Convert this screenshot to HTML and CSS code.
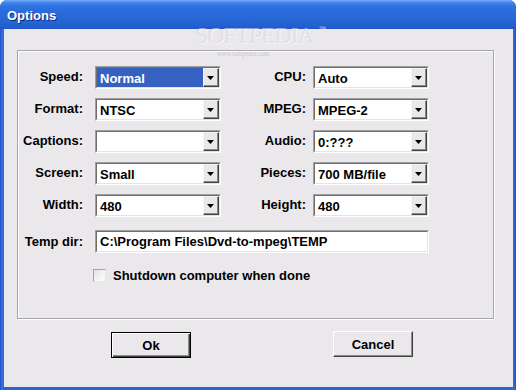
FILE: index.html
```html
<!DOCTYPE html>
<html>
<head>
<meta charset="utf-8">
<title>Options</title>
<link rel="stylesheet" href="styles.css">
</head>
<body>
<div class="window">
  <div class="titlebar"><span class="title">Options</span></div>
  <div class="client">
    <div class="group">
      <div class="form">
        <span class="lbl">Speed:</span>
        <div class="combo"><div class="combo-in"><span class="val sel">Normal</span><span class="drop"></span></div></div>
        <span class="lbl lbl-r">CPU:</span>
        <div class="combo"><div class="combo-in"><span class="val">Auto</span><span class="drop"></span></div></div>

        <span class="lbl">Format:</span>
        <div class="combo"><div class="combo-in"><span class="val">NTSC</span><span class="drop"></span></div></div>
        <span class="lbl lbl-r">MPEG:</span>
        <div class="combo"><div class="combo-in"><span class="val">MPEG-2</span><span class="drop"></span></div></div>

        <span class="lbl">Captions:</span>
        <div class="combo"><div class="combo-in"><span class="val"></span><span class="drop"></span></div></div>
        <span class="lbl lbl-r">Audio:</span>
        <div class="combo"><div class="combo-in"><span class="val">0:???</span><span class="drop"></span></div></div>

        <span class="lbl">Screen:</span>
        <div class="combo"><div class="combo-in"><span class="val">Small</span><span class="drop"></span></div></div>
        <span class="lbl lbl-r">Pieces:</span>
        <div class="combo"><div class="combo-in"><span class="val">700 MB/file</span><span class="drop"></span></div></div>

        <span class="lbl">Width:</span>
        <div class="combo"><div class="combo-in"><span class="val">480</span><span class="drop"></span></div></div>
        <span class="lbl lbl-r">Height:</span>
        <div class="combo"><div class="combo-in"><span class="val">480</span><span class="drop"></span></div></div>

        <span class="lbl lbl-temp">Temp dir:</span>
        <div class="textbox"><div class="textbox-in">C:\Program Files\Dvd-to-mpeg\TEMP</div></div>

        <div class="check"><span class="box"></span><span>Shutdown computer when done</span></div>
      </div>
    </div>
    <div class="buttons">
      <button class="pbtn pbtn-default">Ok</button>
      <button class="pbtn">Cancel</button>
    </div>
  </div>
  <div class="wm">SOFTPEDIA<span class="tm">™</span></div>
  <div class="wm-url">www.softpedia.com</div>
</div>
</body>
</html>
```
FILE: styles.css
```css
html, body {
  margin: 0;
  padding: 0;
  width: 516px;
  height: 390px;
  overflow: hidden;
  background: #ffffff;
}

body {
  font-family: "Liberation Sans", Arial, sans-serif;
  font-size: 13px;
  font-weight: bold;
  color: #000;
}

.window {
  position: relative;
  width: 516px;
  height: 390px;
  box-sizing: border-box;
  border-radius: 7px 7px 0 0;
  background: linear-gradient(to right, #1a4fc4 0px, #3a74e0 2px, #2b63d2 4px, #2b63d2 512px, #3a72de 513px, #1c4fbf 516px);
  display: flex;
  flex-direction: column;
  overflow: hidden;
}

.titlebar {
  height: 29px;
  flex: none;
  border-radius: 7px 7px 0 0;
  background: linear-gradient(to bottom, #7bb1fa 0px, #4a8cf0 2px, #2f72e0 6px, #2a6bdb 12px, #2766d5 20px, #2360cf 26px, #1d57c6 29px);
  display: flex;
  align-items: center;
  padding-left: 7px;
  box-sizing: border-box;
}

.title {
  color: #fff;
  font-size: 13px;
  font-weight: bold;
  padding-top: 2px;
  text-shadow: 1px 1px 0 #0c2a80;
}

.client {
  flex: 1;
  margin: 0 3px 3px 4px;
  background: #ebe8ec;
  display: flex;
  flex-direction: column;
}

.group {
  margin: 21px 0 0 13px;
  width: 477px;
  height: 269px;
  box-sizing: border-box;
  border: 1px solid #a6a5a9;
  box-shadow: 1px 1px 0 #ffffff, inset 1px 1px 0 #ffffff;
  padding-top: 15px;
}

.form {
  display: grid;
  grid-template-columns: 77px 126px 92px 116px;
  grid-template-rows: 23px 23px 23px 23px 23px 27px 21px;
  row-gap: 9px;
  align-items: start;
}

.lbl {
  text-align: right;
  padding-right: 12px;
  line-height: 21px;
  white-space: nowrap;
}

.lbl-r {
  padding-right: 7px;
}

.lbl-temp {
  align-self: end;
  line-height: 21px;
  margin-bottom: 1px;
}

.combo, .textbox {
  height: 23px;
  box-sizing: border-box;
  border: 1px solid;
  border-color: #a0a0a0 #ffffff #ffffff #a0a0a0;
}

.combo-in, .textbox-in {
  height: 100%;
  box-sizing: border-box;
  border: 1px solid;
  border-color: #6e6e6e #e4e3e6 #e4e3e6 #6e6e6e;
  background: #ffffff;
}

.combo-in {
  display: flex;
}

.val {
  flex: 1;
  padding-left: 3px;
  line-height: 21px;
  white-space: nowrap;
  overflow: hidden;
}

.val.sel {
  background: #3562c0;
  color: #ffffff;
}

.drop {
  width: 16px;
  flex: none;
  box-sizing: border-box;
  border: 1px solid;
  border-color: #f4f3f5 #404040 #404040 #f4f3f5;
  box-shadow: inset -1px -1px 0 #8c8c8c;
  background: #ebe8ec;
  display: flex;
  align-items: center;
  justify-content: center;
}

.drop::after {
  content: "";
  width: 7px;
  height: 4px;
  margin: 1px 1px 0 0;
  background: #000;
  clip-path: polygon(0 0, 100% 0, 50% 100%);
}

.textbox {
  grid-column: 2 / 5;
  align-self: end;
  width: 334px;
}

.textbox-in {
  padding-left: 3px;
  line-height: 20px;
  white-space: nowrap;
}

.check {
  grid-column: 2 / 5;
  display: flex;
  align-items: center;
  margin: 7px 0 0 -2px;
  height: 13px;
  line-height: 14px;
  gap: 7px;
  white-space: nowrap;
}

.box {
  width: 13px;
  height: 13px;
  box-sizing: border-box;
  border: 1px solid;
  border-color: #a4a4a4 #e6e6e6 #e6e6e6 #a4a4a4;
  background: linear-gradient(135deg, #e2e1e4, #ffffff);
}

.buttons {
  display: flex;
  gap: 142px;
  padding-left: 107px;
  margin-top: 12px;
}

.pbtn {
  width: 80px;
  height: 26px;
  margin: 0;
  padding: 0;
  font-family: "Liberation Sans", Arial, sans-serif;
  font-size: 13px;
  font-weight: bold;
  color: #000;
  background: #ebe8ec;
  border: 1px solid;
  border-color: #ffffff #404040 #404040 #ffffff;
  box-shadow: inset -1px -1px 0 #8c8c8c;
}

.pbtn-default {
  margin-top: 1px;
  border: 1px solid #000;
  box-shadow: inset 1px 1px 0 #ffffff, inset -1px -1px 0 #404040, inset -2px -2px 0 #8c8c8c;
}

.wm {
  position: absolute;
  left: 195px;
  top: 17px;
  font-family: "Liberation Serif", "Times New Roman", serif;
  font-weight: normal;
  font-size: 24px;
  line-height: 24px;
  letter-spacing: -1.2px;
  color: rgba(215, 215, 228, 0.65);
  text-shadow: 1px 1px 0 rgba(255, 255, 255, 0.55);
  white-space: nowrap;
  pointer-events: none;
}

.tm {
  font-size: 7px;
  letter-spacing: 0;
  vertical-align: 12px;
  margin-left: 5px;
}

.wm-url {
  position: absolute;
  left: 217px;
  top: 48px;
  font-family: "Liberation Serif", "Times New Roman", serif;
  font-weight: normal;
  font-size: 9px;
  line-height: 10px;
  color: rgba(180, 180, 190, 0.7);
  transform: scaleX(0.72);
  transform-origin: left top;
  white-space: nowrap;
  pointer-events: none;
}
```
